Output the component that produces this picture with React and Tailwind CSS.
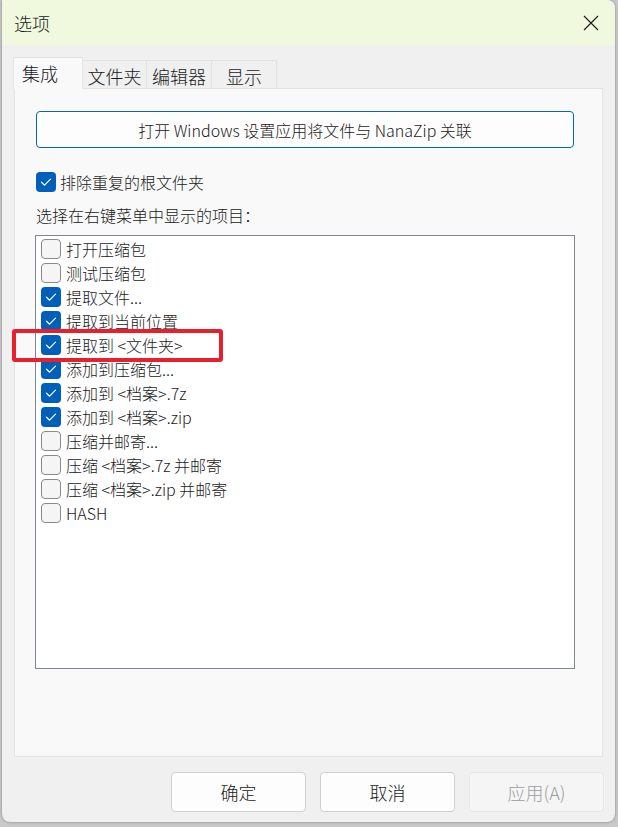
import React from "react";

const items = [
  { label: "打开压缩包", on: false },
  { label: "测试压缩包", on: false },
  { label: "提取文件...", on: true },
  { label: "提取到当前位置", on: true },
  { label: "提取到 <文件夹>", on: true },
  { label: "添加到压缩包...", on: true },
  { label: "添加到 <档案>.7z", on: true },
  { label: "添加到 <档案>.zip", on: true },
  { label: "压缩并邮寄...", on: false },
  { label: "压缩 <档案>.7z 并邮寄", on: false },
  { label: "压缩 <档案>.zip 并邮寄", on: false },
  { label: "HASH", on: false },
];

function Check({ on }) {
  if (on) {
    return (
      <div className="w-[20px] h-[20px] rounded-[4px] bg-[#005fb8] flex items-center justify-center shrink-0">
        <svg width="20" height="20" viewBox="0 0 20 20" fill="none">
          <path d="M5.5 10.2 L8.6 13.2 L14.5 7.2" stroke="#ffffff" strokeWidth="1.2" strokeLinecap="round" strokeLinejoin="round" />
        </svg>
      </div>
    );
  }
  return <div className="w-[20px] h-[20px] rounded-[4px] bg-[#f5f5f5] border border-[#8a8a8a] shrink-0" />;
}

export default function App() {
  return (
    <div
      className="relative w-[618px] h-[827px] bg-[#c9c9c9] pl-[2px] overflow-hidden text-[#1a1a1a]"
      style={{ fontFamily: '"Noto Sans CJK SC", "Noto Sans", sans-serif' }}
    >
      <div className="w-[613px] h-[822px] bg-[#f0f0f0] rounded-tr-[8px] rounded-b-[8px] flex flex-col shadow-[0_0_3px_rgba(0,0,0,0.35)]">
        {/* title bar */}
        <div className="h-[45px] bg-[#f0f8de] rounded-tr-[8px] flex items-center justify-between pl-[12px] pr-[16px] shrink-0">
          <span className="text-[18px] leading-[22px] font-light">选项</span>
          <svg width="16" height="16" viewBox="0 0 16 16" fill="none">
            <path d="M1 1 L15 15 M15 1 L1 15" stroke="#1a1a1a" strokeWidth="1.1" />
          </svg>
        </div>

        {/* tabs */}
        <div className="flex items-end h-[32px] mt-[12px] ml-[11px] -mb-[1px] relative z-10 font-light">
          <div className="w-[70px] h-[32px] bg-[#f9f9f9] border border-b-0 border-[#e3e3e3] pl-[8px] pt-[3px] text-[18px] leading-[24px]">
            集成
          </div>
          {["文件夹", "编辑器", "显示"].map((t, i) => (
            <div
              key={t}
              className={`h-[29px] border border-l-0 border-[#e3e3e3] bg-[#f0f0f0] flex items-center justify-center pt-[2px] text-[18px] leading-[24px] ${
                i === 0 ? "w-[64px]" : "w-[65px]"
              }`}
            >
              {t}
            </div>
          ))}
        </div>

        {/* panel */}
        <div className="ml-[12px] w-[589px] h-[669px] bg-[#f9f9f9] border border-[#e3e3e3] px-[21px] flex flex-col shrink-0 font-light">
          <div className="mt-[22px] h-[37px] w-[538px] rounded-[4px] border border-[#0067c0] bg-[#fdfdfd] flex items-center justify-center text-[16px] leading-[20px]">
            打开 Windows 设置应用将文件与 NanaZip 关联
          </div>

          <div className="mt-[24px] h-[20px] flex items-center gap-[4px]">
            <Check on />
            <span className="text-[16px] leading-[20px]">排除重复的根文件夹</span>
          </div>

          <div className="mt-[12px] h-[22px] flex items-center text-[16px] leading-[20px]">
            选择在右键菜单中显示的项目：
          </div>

          <div className="mt-[9px] -ml-[1px] w-[540px] h-[434px] bg-white border border-[#808690] pt-[1px] pl-[5px]">
            {items.map((it) => (
              <div key={it.label} className="h-[24px] flex items-center gap-[5px]">
                <Check on={it.on} />
                <span className="text-[16px] leading-[20px] whitespace-pre">{it.label}</span>
              </div>
            ))}
          </div>
        </div>

        {/* buttons */}
        <div className="mt-[15px] flex justify-end gap-[14px] pr-[11px] font-light">
          <button className="w-[135px] h-[40px] rounded-[4px] border border-[#d0d0d0] bg-[#fdfdfd] text-[18px] leading-[22px]">
            确定
          </button>
          <button className="w-[135px] h-[40px] rounded-[4px] border border-[#d0d0d0] bg-[#fdfdfd] text-[18px] leading-[22px]">
            取消
          </button>
          <button className="w-[135px] h-[40px] rounded-[4px] border border-[#e8e8e8] bg-[#f5f5f5] text-[18px] leading-[22px] text-[#9d9d9d]">
            应用(A)
          </button>
        </div>
      </div>

      {/* red highlight annotation */}
      <div className="absolute left-[12px] top-[329px] w-[211px] h-[33px] border-[4px] border-[#e8202e] rounded-[3px]" />
    </div>
  );
}
